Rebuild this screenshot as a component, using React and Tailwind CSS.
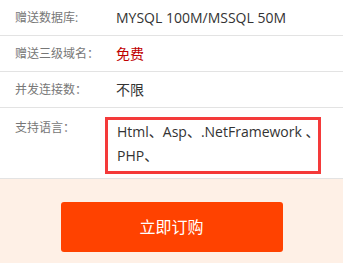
import React from 'react';

const rows = [
  { label: '赠送数据库:', value: 'MYSQL 100M/MSSQL 50M', cls: 'text-[#333]' },
  { label: '赠送三级域名：', value: '免费', cls: 'text-[#c00000]' },
  { label: '并发连接数：', value: '不限', cls: 'text-[#333]' },
];

const App = () => {
  return (
    <div className="w-[343px] h-[263px] bg-white font-['Open_Sans','Noto_Sans_CJK_SC',sans-serif] overflow-hidden">
      {rows.map((r) => (
        <div key={r.label} className="flex items-center h-[36px] border-b border-[#e3e3e3]">
          <span className="w-[116px] pl-[15px] text-[12px] text-[#777]">{r.label}</span>
          <span className={`text-[14px] ${r.cls}`}>{r.value}</span>
        </div>
      ))}

      <div className="flex h-[71px] border-b border-[#e3e3e3]">
        <span className="w-[105px] pl-[15px] pt-[11px] text-[12px] text-[#777]">支持语言：</span>
        <div className="mt-[9px] w-[216px] h-[57px] border-[3px] border-[#f43a3a] pl-[9px] text-[14px] leading-[24px] text-[#333] whitespace-nowrap">
          Html、Asp、.NetFramework 、
          <br />
          PHP、
        </div>
      </div>

      <div className="bg-[#fef0e6] h-[84px] flex justify-center pt-[23px]">
        <button className="w-[222px] h-[50px] rounded-[3px] bg-[#ff4200] text-white text-[16px]">
          立即订购
        </button>
      </div>
    </div>
  );
};

export default App;
